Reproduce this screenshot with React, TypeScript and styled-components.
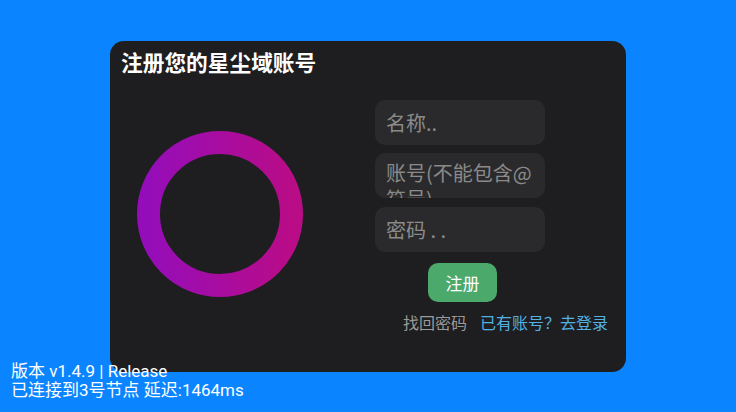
import React from "react";
import styled, { createGlobalStyle } from "styled-components";

const GlobalStyle = createGlobalStyle`
  html, body {
    margin: 0;
    padding: 0;
    height: 100%;
    background: #0b85ff;
    font-family: Roboto, "Noto Sans CJK SC", sans-serif;
  }
  #root {
    height: 100%;
  }
`;

const App = () => {
  return (
    <>
      <GlobalStyle />
      <Page>
        <Card>
          <Title>注册您的星尘域账号</Title>
          <CardBody>
            <RingBox>
              <svg width="166" height="166" viewBox="0 0 166 166">
                <defs>
                  <linearGradient id="ringGrad" x1="0" y1="0" x2="1" y2="0">
                    <stop offset="0" stopColor="#950db9" />
                    <stop offset="1" stopColor="#b90c87" />
                  </linearGradient>
                </defs>
                <circle
                  cx="83"
                  cy="83"
                  r="71.5"
                  fill="none"
                  stroke="url(#ringGrad)"
                  strokeWidth="23"
                />
              </svg>
            </RingBox>
            <Form>
              <TextInput placeholder="名称.." />
              <TextArea placeholder="账号(不能包含@符号)" rows={2} />
              <TextInput type="text" placeholder="密码 . ." />
              <SubmitButton>注册</SubmitButton>
              <LinksRow>
                <GrayLink>找回密码</GrayLink>
                <BlueLink>已有账号？去登录</BlueLink>
              </LinksRow>
            </Form>
          </CardBody>
        </Card>
        <Status>
          <div>版本 v1.4.9 | Release</div>
          <div>已连接到3号节点 延迟:1464ms</div>
        </Status>
      </Page>
    </>
  );
};

const Page = styled.div`
  position: relative;
  height: 100%;
  display: flex;
  align-items: center;
  justify-content: center;
`;

const Card = styled.div`
  width: 516px;
  height: 331px;
  box-sizing: border-box;
  background: #1e1e20;
  border-radius: 14px;
  padding: 7px 18px 0 11px;
  display: flex;
  flex-direction: column;
`;

const Title = styled.div`
  color: #ffffff;
  font-family: "Noto Sans CJK SC", sans-serif;
  font-weight: 700;
  font-size: 21.7px;
  line-height: 28px;
`;

const CardBody = styled.div`
  display: flex;
  flex: 1;
`;

const RingBox = styled.div`
  width: 166px;
  height: 166px;
  margin: 55px 0 0 16px;
`;

const Form = styled.div`
  margin: 24px 0 0 72px;
  flex: 1;
  display: flex;
  flex-direction: column;
`;

const fieldBase = `
  width: 170px;
  height: 45px;
  box-sizing: border-box;
  border: none;
  outline: none;
  border-radius: 10px;
  background: #2a2a2c;
  color: #dddddd;
  font-family: "Noto Sans CJK SC", sans-serif;
  font-size: 20px;
  padding: 0 11px;
  &::placeholder {
    color: #8a8a8a;
  }
`;

const TextInput = styled.input`
  ${fieldBase}
  & + & {
    margin-top: 9px;
  }
`;

const TextArea = styled.textarea`
  ${fieldBase}
  margin: 8px 0 9px;
  padding-top: 7px;
  line-height: 26px;
  resize: none;
  overflow: hidden;
  display: block;
`;

const SubmitButton = styled.button`
  align-self: flex-start;
  margin: 11px 0 0 53px;
  width: 69px;
  height: 39px;
  border: none;
  border-radius: 10px;
  background: #4ca96c;
  color: #ffffff;
  font-family: "Noto Sans CJK SC", sans-serif;
  font-size: 17px;
`;

const LinksRow = styled.div`
  margin-top: 9px;
  display: flex;
  justify-content: flex-end;
  gap: 13px;
  font-family: "Noto Sans CJK SC", sans-serif;
  font-size: 16px;
  line-height: 22px;
`;

const GrayLink = styled.span`
  color: #9a9a9a;
`;

const BlueLink = styled.span`
  color: #52b2e4;
`;

const Status = styled.div`
  position: absolute;
  left: 11px;
  bottom: 12px;
  color: #ffffff;
  font-size: 17px;
  line-height: 19px;
`;

export default App;
